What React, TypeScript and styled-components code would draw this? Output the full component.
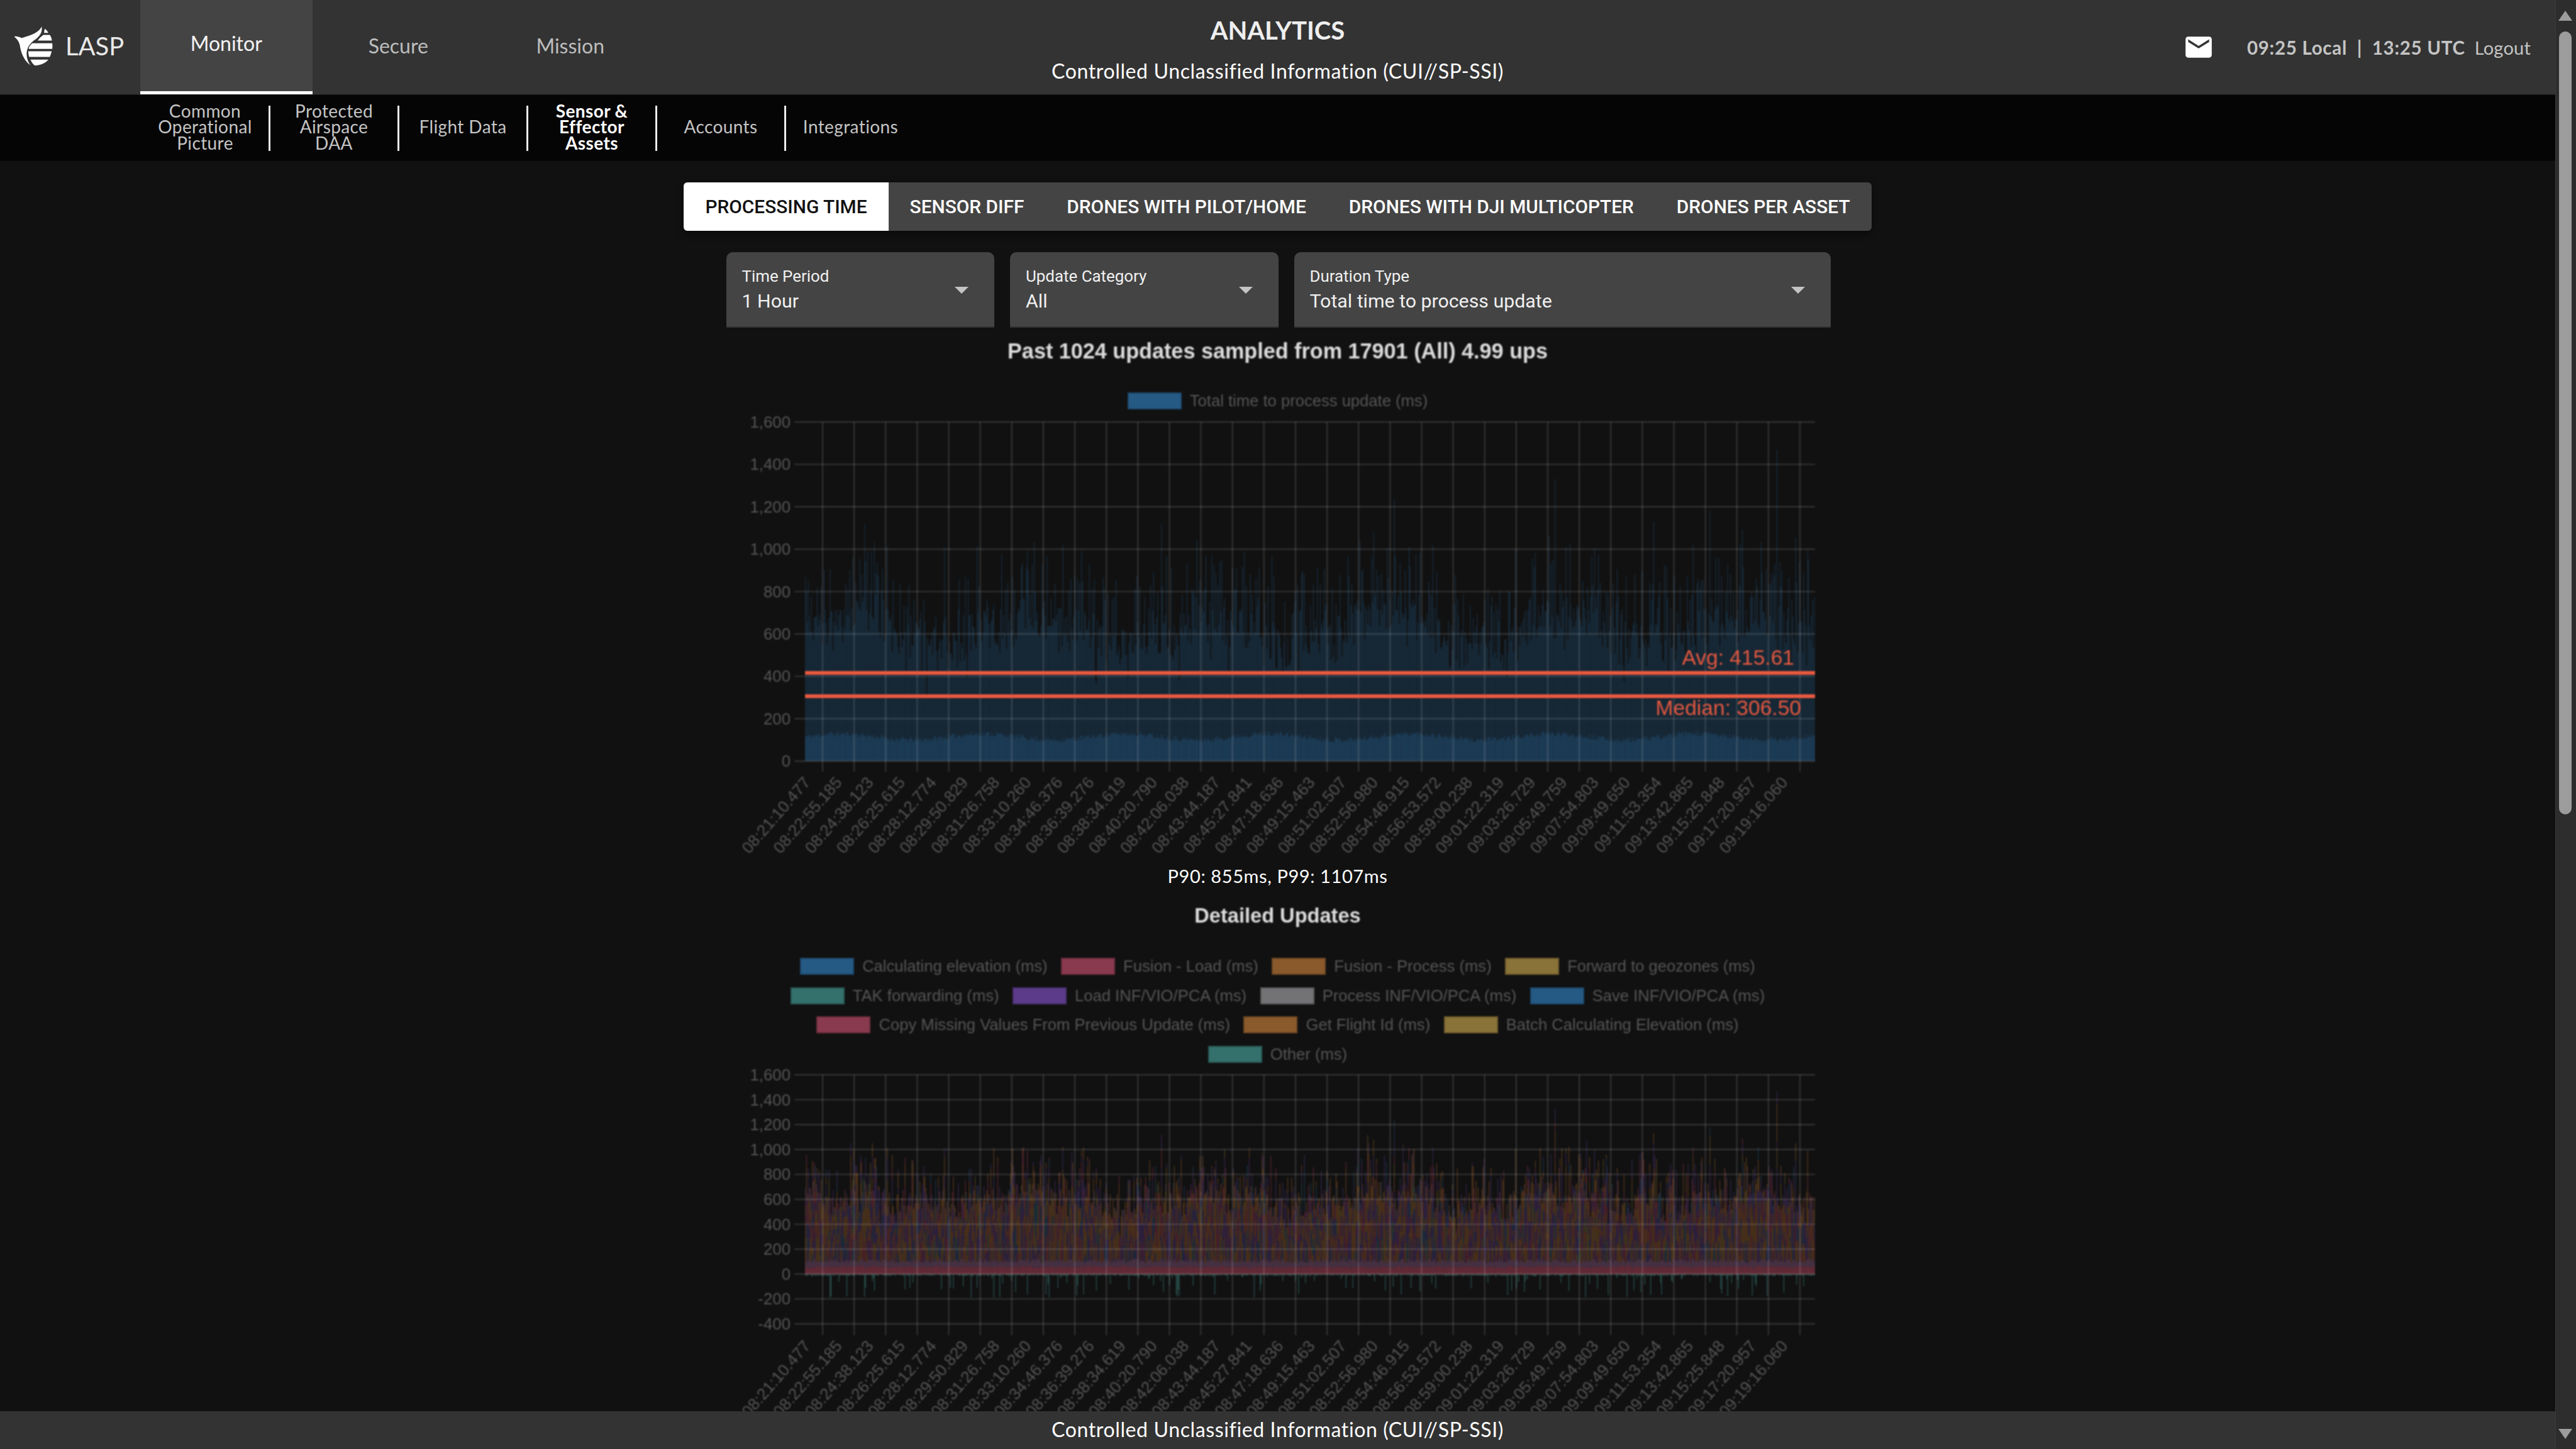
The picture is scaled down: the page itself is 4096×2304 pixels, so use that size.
import { useMemo } from "react"
import styled, { createGlobalStyle } from "styled-components"

const GlobalStyle = createGlobalStyle`
  html, body, #root {
    margin: 0;
    height: 100%;
    overflow: hidden;
    background: #111;
  }
`

const UI_FONT = `Lato, "Noto Sans", sans-serif`
const CHART_FONT = `"Liberation Sans", Arial, sans-serif`

const Page = styled.div`
  display: flex;
  height: 100vh;
  font-family: ${UI_FONT};
`

const Column = styled.div`
  flex: 1;
  min-width: 0;
  display: flex;
  flex-direction: column;
`

const Header = styled.header`
  height: 150px;
  flex: none;
  background: #333;
  display: grid;
  grid-template-columns: 1fr auto 1fr;
`

const HeaderLeft = styled.div`
  display: flex;
`

const Brand = styled.div`
  width: 223px;
  display: flex;
  align-items: center;
  gap: 20px;
  padding: 0 0 4px 22px;
  box-sizing: border-box;
  color: #e8e8e8;
  font-size: 40px;
`

const MainTab = styled.div<{ $active?: boolean }>`
  width: 273.5px;
  box-sizing: border-box;
  display: flex;
  align-items: center;
  justify-content: center;
  font-size: 32px;
  color: ${(p) => (p.$active ? "#f4f4f4" : "#bdbdbd")};
  background: ${(p) => (p.$active ? "#444" : "transparent")};
  border-bottom: ${(p) => (p.$active ? "5px solid #fff" : "none")};
  padding-bottom: ${(p) => (p.$active ? "8px" : "6px")};
`

const HeaderCenter = styled.div`
  display: flex;
  flex-direction: column;
  align-items: center;
  color: #fff;
`

const PageTitle = styled.div`
  font-size: 40px;
  font-weight: 700;
  line-height: 50px;
  margin-top: 23px;
  color: #eee;
`

const Banner = styled.div`
  font-size: 32px;
  line-height: 40px;
  letter-spacing: 0.63px;
  color: #fff;
`

const HeaderBanner = styled(Banner)`
  margin-top: 20px;
`

const HeaderRight = styled.div`
  display: flex;
  align-items: center;
  justify-content: flex-end;
  padding-right: 39px;
  color: #c4c4c4;
  font-size: 29px;
`

const MailIcon = styled.svg`
  width: 50px;
  height: 50px;
  margin-right: 52px;
  fill: #fff;
`

const Clock = styled.span`
  font-size: 29.5px;
  font-weight: 700;
  letter-spacing: 0.7px;
  white-space: pre;
`

const Logout = styled.span`
  margin-left: 15px;
  letter-spacing: 0.2px;
`

const SubNav = styled.nav`
  height: 106px;
  flex: none;
  box-sizing: border-box;
  background: #050505;
  border-top: 1px solid #1c1c1c;
  padding-left: 225px;
  display: flex;
  align-items: center;
`

const SubItem = styled.div<{ $active?: boolean; $last?: boolean }>`
  width: 205px;
  height: 72px;
  padding: 0 25px 3px;
  box-sizing: border-box;
  display: flex;
  align-items: center;
  justify-content: center;
  text-align: center;
  font-size: 28px;
  line-height: 25.5px;
  letter-spacing: 0.4px;
  font-weight: ${(p) => (p.$active ? 700 : 400)};
  color: ${(p) => (p.$active ? "#fff" : "#c4c4c4")};
  border-right: ${(p) => (p.$last ? "none" : "3px solid #ededed")};
`

const Content = styled.main`
  flex: 1;
  min-height: 0;
  overflow: hidden;
  display: flex;
  flex-direction: column;
  align-items: center;
  padding-top: 34px;
  background: #111;
`

const TabBar = styled.div`
  flex: none;
  height: 77px;
  display: flex;
  background: #444;
  border-radius: 6px;
  overflow: hidden;
  box-shadow: 0 4px 12px rgba(0, 0, 0, 0.5);
`

const Tab = styled.div<{ $active?: boolean }>`
  display: flex;
  align-items: center;
  padding: 0 34px;
  font-family: Roboto, sans-serif;
  font-weight: 500;
  font-size: 29.85px;
  white-space: nowrap;
  color: ${(p) => (p.$active ? "#111" : "#fff")};
  background: ${(p) => (p.$active ? "#fff" : "transparent")};
`

const Filters = styled.div`
  flex: none;
  width: 1756px;
  margin: 34px 0 0 2px;
  display: grid;
  grid-template-columns: 1fr 1fr 2fr;
  gap: 25px;
  font-family: Roboto, sans-serif;
`

const Select = styled.div`
  position: relative;
  height: 120px;
  box-sizing: border-box;
  padding: 23px 25px 0;
  background: #444;
  border-radius: 10px 10px 0 0;
  border-bottom: 2px solid #333;
  color: #f0f0f0;
`

const SelectLabel = styled.div`
  font-size: 25.9px;
  line-height: 30px;
`

const SelectValue = styled.div`
  font-size: 30.3px;
  line-height: 40px;
  margin-top: 5px;
`

const Caret = styled.div`
  position: absolute;
  right: 41px;
  top: 55px;
  border-left: 11px solid transparent;
  border-right: 11px solid transparent;
  border-top: 11px solid #c4c4c4;
`

const ChartTitle = styled.div<{ $top: number; $size: number }>`
  flex: none;
  margin-top: ${(p) => p.$top}px;
  font-family: ${CHART_FONT};
  font-size: ${(p) => p.$size}px;
  line-height: 36px;
  font-weight: 700;
  color: #dcdcdc;
  filter: blur(1px);
`

const Legend = styled.div<{ $top: number }>`
  flex: none;
  width: 1606px;
  margin-top: ${(p) => p.$top}px;
  display: flex;
  flex-wrap: wrap;
  justify-content: center;
  column-gap: 21.5px;
  row-gap: 19.6px;
  filter: blur(0.8px);
`

const LegendItem = styled.div`
  display: flex;
  align-items: center;
  gap: 13px;
  font-family: ${CHART_FONT};
  font-size: 25.6px;
  line-height: 27px;
  color: #555;
`

const LegendSwatch = styled.span<{ $color: string }>`
  width: 86px;
  height: 27px;
  box-sizing: border-box;
  background: ${(p) => p.$color};
  border: 2px solid rgba(0, 0, 0, 0.18);
`

const Plot = styled.svg<{ $top: number; $height: number }>`
  flex: none;
  display: block;
  width: 1800px;
  height: ${(p) => p.$height}px;
  margin-top: ${(p) => p.$top}px;
  font-family: ${CHART_FONT};
  filter: blur(0.8px);
`

const TickLabel = styled.text`
  fill: #555;
  font-size: 25.8px;
`

const AnnotationLabel = styled.text`
  fill: #e5583f;
  font-size: 33.6px;
`

const Percentiles = styled.div`
  flex: none;
  font-size: 29px;
  line-height: 46px;
  letter-spacing: 0.6px;
  color: #fff;
`

const Footer = styled.footer`
  height: 60px;
  flex: none;
  box-sizing: border-box;
  padding-bottom: 3px;
  background: #333;
  display: flex;
  align-items: center;
  justify-content: center;
`

const Scrollbar = styled.aside`
  position: relative;
  width: 32px;
  flex: none;
  background: #2d2d2d;
  border-left: 1px solid #3a3a3a;
`

const ScrollThumb = styled.div`
  position: absolute;
  left: 5px;
  top: 50px;
  width: 20px;
  height: 1245px;
  border-radius: 10px;
  background: #9c9c9c;
`

const ScrollArrow = styled.div<{ $down?: boolean }>`
  position: absolute;
  left: 4px;
  ${(p) => (p.$down ? "top: 2272px;" : "top: 17px;")}
  border-left: 11px solid transparent;
  border-right: 11px solid transparent;
  ${(p) => (p.$down ? "border-top: 16px solid #9c9c9c;" : "border-bottom: 16px solid #9c9c9c;")}
`

const TIMES = [
  "08:21:10.477", "08:22:55.185", "08:24:38.123", "08:26:25.615", "08:28:12.774", "08:29:50.829",
  "08:31:26.758", "08:33:10.260", "08:34:46.376", "08:36:39.276", "08:38:34.619", "08:40:20.790",
  "08:42:06.038", "08:43:44.187", "08:45:27.841", "08:47:18.636", "08:49:15.463", "08:51:02.507",
  "08:52:56.980", "08:54:46.915", "08:56:53.572", "08:59:00.238", "09:01:22.319", "09:03:26.729",
  "09:05:49.759", "09:07:54.803", "09:09:49.650", "09:11:53.354", "09:13:42.865", "09:15:25.848",
  "09:17:20.957", "09:19:16.060",
]

const DETAIL_LEGEND = [
  ["#255a85", "Calculating elevation (ms)"],
  ["#8a3a4e", "Fusion - Load (ms)"],
  ["#8a5a2c", "Fusion - Process (ms)"],
  ["#8a7338", "Forward to geozones (ms)"],
  ["#34706c", "TAK forwarding (ms)"],
  ["#5c3b8a", "Load INF/VIO/PCA (ms)"],
  ["#737375", "Process INF/VIO/PCA (ms)"],
  ["#255a85", "Save INF/VIO/PCA (ms)"],
  ["#8a3a4e", "Copy Missing Values From Previous Update (ms)"],
  ["#8a5a2c", "Get Flight Id (ms)"],
  ["#8a7338", "Batch Calculating Elevation (ms)"],
  ["#34706c", "Other (ms)"],
]

const PLOT_LEFT = 148
const PLOT_RIGHT = 1754
const GRID_X0 = 176
const GRID_STEP = 50.13
const BARS = 1024
const BAR_W = (PLOT_RIGHT - PLOT_LEFT) / BARS

// peaks read off the reference: [bar index, value]
const SPIKES: [number, number][] = [
  [3, 850], [83, 1010], [141, 1010], [225, 990], [261, 1020], [280, 990], [361, 1120], [576, 1080],
  [597, 1235], [612, 1010], [636, 1020], [760, 1330], [771, 1010], [800, 1000], [640, 890], [720, 1000],
  [860, 1130], [900, 1020], [917, 1180], [950, 1090], [985, 1470], [1004, 1050], [1016, 1000],
]

function rng(seed: number) {
  let a = seed
  return () => {
    a = (a + 0x6d2b79f5) | 0
    let t = Math.imul(a ^ (a >>> 15), 1 | a)
    t = (t + Math.imul(t ^ (t >>> 7), 61 | t)) ^ t
    return ((t ^ (t >>> 14)) >>> 0) / 4294967296
  }
}

function totals(seed: number) {
  const r = rng(seed)
  const out: number[] = []
  for (let i = 0; i < BARS; i++) {
    const slow = 60 * Math.sin(i / 29) + 40 * Math.sin(i / 9 + 1)
    let v = 500 + slow + r() * 200
    if (r() < 0.45) v += r() * 340
    if (r() < 0.1) v -= r() * 170
    out.push(v)
  }
  SPIKES.forEach(([i, v]) => (out[i] = v))
  return out
}

type Bar = [number, number, number]

function barPath(ranges: Bar[]) {
  return ranges
    .map(([i, from, to]) => {
      const x = PLOT_LEFT + i * BAR_W
      return `M${x.toFixed(1)} ${from.toFixed(1)}V${to.toFixed(1)}h${(BAR_W * 0.86).toFixed(2)}V${from.toFixed(1)}z`
    })
    .join("")
}

type Axis = { top: number; step: number; ticks: string[]; zero: number; tickEnd: number }

const Grid = ({ axis, bottom }: { axis: Axis; bottom: number }) => (
  <g stroke="rgba(255,255,255,0.13)" strokeWidth={2.4}>
    {axis.ticks.map((t, i) => (
      <line key={t} x1={131} x2={PLOT_RIGHT} y1={axis.top + i * axis.step} y2={axis.top + i * axis.step} />
    ))}
    {TIMES.map((t, i) => (
      <line key={t} x1={GRID_X0 + i * GRID_STEP} x2={GRID_X0 + i * GRID_STEP} y1={axis.top} y2={bottom} />
    ))}
  </g>
)

const AxisLabels = ({ axis }: { axis: Axis }) => (
  <g>
    {axis.ticks.map((t, i) => (
      <TickLabel key={t} x={125} y={axis.top + i * axis.step + 9} textAnchor="end">
        {t}
      </TickLabel>
    ))}
    {TIMES.map((t, i) => {
      const x = GRID_X0 + i * GRID_STEP - 18
      const y = axis.tickEnd + 18
      return (
        <TickLabel key={t} x={x} y={y} textAnchor="end" transform={`rotate(-49 ${x} ${y})`}>
          {t}
        </TickLabel>
      )
    })}
  </g>
)

const TotalChart = () => {
  const axis: Axis = {
    top: 11,
    step: 67.4,
    zero: 550,
    tickEnd: 567,
    ticks: ["1,600", "1,400", "1,200", "1,000", "800", "600", "400", "200", "0"],
  }
  const { upper, lower } = useMemo(() => {
    const r = rng(11)
    const k = (8 * axis.step) / 1600
    const vals = totals(7)
    const up: Bar[] = []
    const low: Bar[] = []
    vals.forEach((v, i) => {
      const band = 102 + 14 * Math.sin(i / 23) + r() * 26
      up.push([i, axis.zero - v * k, axis.zero - band * k])
      low.push([i, axis.zero - band * k, axis.zero])
    })
    return { upper: barPath(up), lower: barPath(low) }
  }, [])

  return (
    <Plot $top={9} $height={710} viewBox="0 0 1800 710">
      <path d={upper} fill="rgb(36,90,133)" fillOpacity={0.37} />
      <path d={lower} fill="rgb(36,90,133)" fillOpacity={0.66} />
      <Grid axis={axis} bottom={axis.tickEnd} />
      <AxisLabels axis={axis} />
      <rect x={PLOT_LEFT} width={PLOT_RIGHT - PLOT_LEFT} y={407} height={6} fill="#e9593f" />
      <rect x={PLOT_LEFT} width={PLOT_RIGHT - PLOT_LEFT} y={444} height={6} fill="#e9593f" />
      <AnnotationLabel x={1721} y={397} textAnchor="end">
        Avg: 415.61
      </AnnotationLabel>
      <AnnotationLabel x={1732} y={477} textAnchor="end">
        Median: 306.50
      </AnnotationLabel>
    </Plot>
  )
}

// series colours in the stacked chart; the weights say how much of the upper part each one takes
const STACK_COLORS = ["#5c3b8a", "#a8642a", "#a83a52", "#255a85", "#8a7338", "#34706c"]
const STACK_WEIGHTS = [0.32, 0.4, 0.15, 0.07, 0.05, 0.01]

const DetailChart = () => {
  const axis: Axis = {
    top: 10,
    step: 39.6,
    zero: 327,
    tickEnd: 424,
    ticks: ["1,600", "1,400", "1,200", "1,000", "800", "600", "400", "200", "0", "-200", "-400"],
  }
  const layers = useMemo(() => {
    const r = rng(23)
    const k = (8 * axis.step) / 1600
    const vals = totals(19)
    const upper: Bar[][] = STACK_COLORS.map(() => [])
    const bandRed: Bar[] = []
    const bandPurple: Bar[] = []
    const other: Bar[] = []
    const pick = () => {
      let x = r()
      for (let c = 0; c < STACK_WEIGHTS.length; c++) {
        x -= STACK_WEIGHTS[c]
        if (x <= 0) return c
      }
      return 0
    }
    vals.forEach((v, i) => {
      const red = 45 + r() * 25
      const top = 90 + r() * 35
      bandRed.push([i, axis.zero - red * k, axis.zero])
      bandPurple.push([i, axis.zero - top * k, axis.zero - red * k])
      let y = top
      let colour = pick()
      while (y < v) {
        const seg = 40 + r() * 150
        const end = Math.min(y + seg, v)
        upper[colour].push([i, axis.zero - end * k, axis.zero - y * k])
        y = end
        colour = pick()
      }
      const neg = r() < 0.12 ? r() * 190 : r() * 16
      other.push([i, axis.zero, axis.zero + neg * k])
    })
    return {
      upper: upper.map(barPath),
      bandRed: barPath(bandRed),
      bandPurple: barPath(bandPurple),
      other: barPath(other),
    }
  }, [])

  return (
    <Plot $top={9.3} $height={600} viewBox="0 0 1800 600">
      {layers.upper.map((d, i) => (
        <path key={i} d={d} fill={STACK_COLORS[i]} fillOpacity={0.42} />
      ))}
      <path d={layers.bandRed} fill="#b0445c" fillOpacity={0.58} />
      <path d={layers.bandPurple} fill="#7f5478" fillOpacity={0.55} />
      <path d={layers.other} fill="#34706c" fillOpacity={0.65} />
      <Grid axis={axis} bottom={axis.tickEnd} />
      <AxisLabels axis={axis} />
    </Plot>
  )
}

const LaspLogo = () => (
  <svg width="62" height="63" viewBox="64 124 186 190" fill="#fff">
    <path d="M65 172 C80 170 92 176 102 180 C130 170 180 160 197 125 C200 145 195 165 170 184 C145 200 128 220 125 250 C124 275 132 295 143 310 C120 295 100 260 94 225 C92 200 80 185 65 172Z" />
    <path d="M212 135 C220 140 225 147 229 155 L208 155Z" />
    <path d="M205 165 L236 165 C241 172 245 182 246 192 L178 192 C185 182 195 172 205 165Z" />
    <path d="M152 205 L248 205 C249 214 249 223 248 232 L134 232 C136 222 143 212 152 205Z" />
    <path d="M133 243 L245 243 C243 252 240 261 236 270 L137 270 C134 262 133 252 133 243Z" />
    <path d="M143 283 L229 283 C218 297 200 308 165 312 C155 305 148 295 143 283Z" />
  </svg>
)

export default function App() {
  return (
    <Page>
      <GlobalStyle />
      <Column>
        <Header>
          <HeaderLeft>
            <Brand>
              <LaspLogo />
              <span>LASP</span>
            </Brand>
            <MainTab $active>Monitor</MainTab>
            <MainTab>Secure</MainTab>
            <MainTab>Mission</MainTab>
          </HeaderLeft>
          <HeaderCenter>
            <PageTitle>ANALYTICS</PageTitle>
            <HeaderBanner>Controlled Unclassified Information (CUI//SP-SSI)</HeaderBanner>
          </HeaderCenter>
          <HeaderRight>
            <MailIcon viewBox="0 0 24 24">
              <path d="M20 4H4c-1.1 0-1.99.9-1.99 2L2 18c0 1.1.9 2 2 2h16c1.1 0 2-.9 2-2V6c0-1.1-.9-2-2-2zm0 4l-8 5-8-5V6l8 5 8-5v2z" />
            </MailIcon>
            <Clock>09:25 Local  |  13:25 UTC</Clock>
            <Logout>Logout</Logout>
          </HeaderRight>
        </Header>
        <SubNav>
          <SubItem>Common Operational Picture</SubItem>
          <SubItem>Protected Airspace DAA</SubItem>
          <SubItem>Flight Data</SubItem>
          <SubItem $active>Sensor &amp; Effector Assets</SubItem>
          <SubItem>Accounts</SubItem>
          <SubItem $last>Integrations</SubItem>
        </SubNav>
        <Content>
          <TabBar>
            <Tab $active>PROCESSING TIME</Tab>
            <Tab>SENSOR DIFF</Tab>
            <Tab>DRONES WITH PILOT/HOME</Tab>
            <Tab>DRONES WITH DJI MULTICOPTER</Tab>
            <Tab>DRONES PER ASSET</Tab>
          </TabBar>
          <Filters>
            <Select>
              <SelectLabel>Time Period</SelectLabel>
              <SelectValue>1 Hour</SelectValue>
              <Caret />
            </Select>
            <Select>
              <SelectLabel>Update Category</SelectLabel>
              <SelectValue>All</SelectValue>
              <Caret />
            </Select>
            <Select>
              <SelectLabel>Duration Type</SelectLabel>
              <SelectValue>Total time to process update</SelectValue>
              <Caret />
            </Select>
          </Filters>
          <ChartTitle $top={19} $size={34.2}>
            Past 1024 updates sampled from 17901 (All) 4.99 ups
          </ChartTitle>
          <Legend $top={48}>
            <LegendItem>
              <LegendSwatch $color="#255a85" />
              Total time to process update (ms)
            </LegendItem>
          </Legend>
          <TotalChart />
          <Percentiles>P90: 855ms, P99: 1107ms</Percentiles>
          <ChartTitle $top={22} $size={32.6}>
            Detailed Updates
          </ChartTitle>
          <Legend $top={49}>
            {DETAIL_LEGEND.map(([color, label]) => (
              <LegendItem key={label}>
                <LegendSwatch $color={color} />
                {label}
              </LegendItem>
            ))}
          </Legend>
          <DetailChart />
        </Content>
        <Footer>
          <Banner>Controlled Unclassified Information (CUI//SP-SSI)</Banner>
        </Footer>
      </Column>
      <Scrollbar>
        <ScrollArrow />
        <ScrollThumb />
        <ScrollArrow $down />
      </Scrollbar>
    </Page>
  )
}
